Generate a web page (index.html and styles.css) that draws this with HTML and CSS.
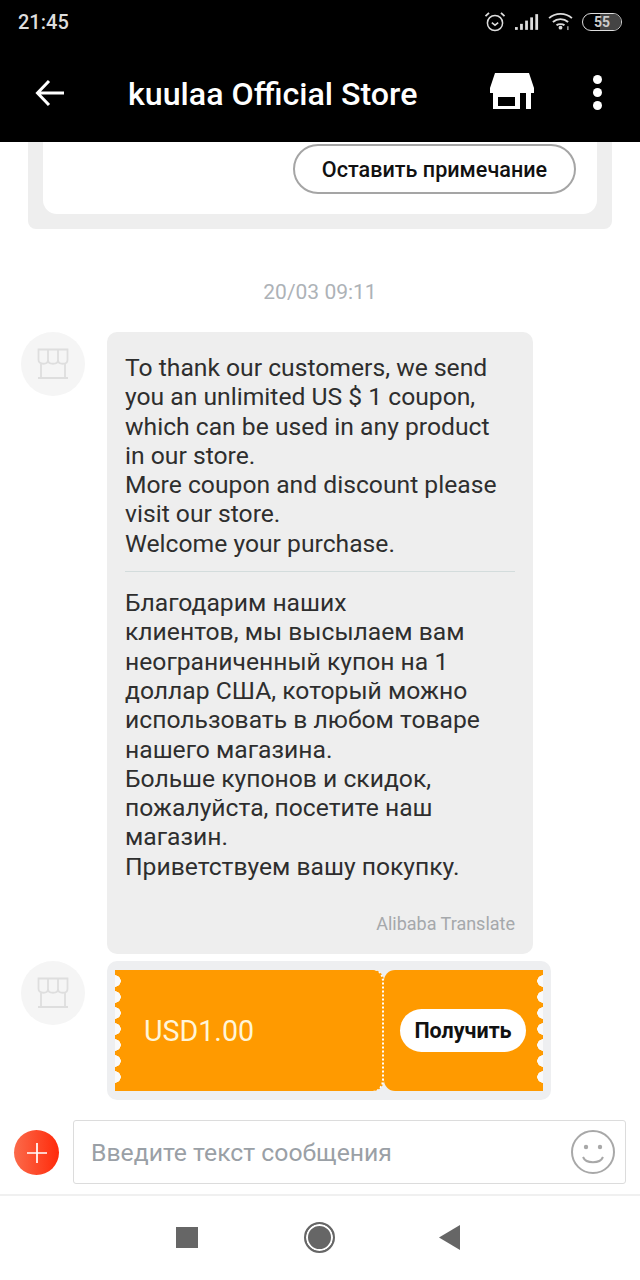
FILE: index.html
```html
<!DOCTYPE html>
<html lang="en">
<head>
    <meta charset="UTF-8">
    <meta name="viewport" content="width=device-width, initial-scale=1.0">
    <title>kuulaa Official Store</title>
    <link rel="stylesheet" href="styles.css">
</head>
<body>
    <div class="page">
        <header class="top">
            <div class="status">
                <span class="clock">21:45</span>
                <div class="status-icons">
                    <svg class="ic-alarm" width="22" height="22" viewBox="0 0 22 22" fill="none" stroke="#ddd" stroke-width="1.5">
                        <circle cx="11" cy="12" r="7.6"/>
                        <path d="M7.8 11.6l3.2 2.6 3.2-2.6"/>
                        <path d="M1.5 5.2L5 1.8M20.5 5.2L17 1.8" stroke-width="1.8"/>
                    </svg>
                    <svg class="ic-signal" width="24" height="18" viewBox="0 0 26 18" fill="#ddd">
                        <rect x="0" y="14.5" width="3" height="3"/>
                        <rect x="5.5" y="11" width="3" height="6.500"/>
                        <rect x="11" y="7.500" width="3" height="10"/>
                        <rect x="16.500" y="4" width="3" height="13.500"/>
                        <rect x="22" y="0.500" width="3" height="17"/>
                    </svg>
                    <svg class="ic-wifi" width="25" height="19" viewBox="0 0 26 20" fill="none" stroke="#ddd" stroke-width="2">
                        <path d="M1 6.500C7.500 0.500 18.500 0.500 25 6.500"/>
                        <path d="M5 10.500C9.500 6.500 16.500 6.500 21 10.500"/>
                        <path d="M8.800 14C11 12.300 15 12.300 17.200 14"/>
                        <circle cx="13" cy="16.500" r="2" fill="#ddd" stroke="none"/>
                        <rect x="20" y="15" width="1.500" height="4" fill="#aaa" stroke="none"/>
                    </svg>
                    <div class="battery"><span class="battery-fill"></span><span class="battery-num">55</span></div>
                </div>
            </div>
            <div class="toolbar">
                <svg class="ic-back" width="30" height="28" viewBox="0 0 30 28" fill="none" stroke="#fff" stroke-width="3">
                    <path d="M29 14H3M14 2L2.500 14 14 26"/>
                </svg>
                <h1 class="title">kuulaa Official Store</h1>
                <svg class="ic-store" width="44" height="36" viewBox="0 0 44 36" fill="#fff">
                    <path d="M5 0H39L44 15V20H0V15Z"/>
                    <path fill-rule="evenodd" d="M3 20H41V36H36V20H30V36H3ZM8 24V33H25V24Z"/>
                </svg>
                <div class="more"><i></i><i></i><i></i></div>
            </div>
        </header>

        <main class="chat">
            <div class="order-card">
                <div class="order-inner">
                    <button class="note-btn">Оставить примечание</button>
                </div>
            </div>

            <div class="time">20/03 09:11</div>

            <div class="msg">
                <div class="avatar">
                    <svg width="32" height="32" viewBox="0 0 32 32" fill="none" stroke="#dedede" stroke-width="1.800">
                        <path d="M1.500 1.500H30.500V12C30.500 17 21 17 21 12C21 17 11 17 11 12C11 17 1.500 17 1.500 12Z"/>
                        <path d="M11 1.500V12M21 1.500V12"/>
                        <path d="M4 16V30H28V16M1 30H31"/>
                    </svg>
                </div>
                <div class="bubble">
                    <p class="bubble-text">To thank our customers, we send<br>you an unlimited US $ 1 coupon,<br>which can be used in any product<br>in our store.<br>More coupon and discount please<br>visit our store.<br>Welcome your purchase.</p>
                    <hr class="bubble-line">
                    <p class="bubble-text">Благодарим наших<br>клиентов, мы высылаем вам<br>неограниченный купон на 1<br>доллар США, который можно<br>использовать в любом товаре<br>нашего магазина.<br>Больше купонов и скидок,<br>пожалуйста, посетите наш<br>магазин.<br>Приветствуем вашу покупку.</p>
                    <div class="translate">Alibaba Translate</div>
                </div>
            </div>

            <div class="msg msg-coupon">
                <div class="avatar">
                    <svg width="32" height="32" viewBox="0 0 32 32" fill="none" stroke="#dedede" stroke-width="1.800">
                        <path d="M1.500 1.500H30.500V12C30.500 17 21 17 21 12C21 17 11 17 11 12C11 17 1.500 17 1.500 12Z"/>
                        <path d="M11 1.500V12M21 1.500V12"/>
                        <path d="M4 16V30H28V16M1 30H31"/>
                    </svg>
                </div>
                <div class="coupon">
                    <div class="coupon-left">USD1.00</div>
                    <div class="coupon-right"><button class="get-btn">Получить</button></div>
                </div>
            </div>
        </main>

        <div class="input-row">
            <div class="plus">
                <svg width="22" height="22" viewBox="0 0 22 22" stroke="#fff" stroke-width="1.700"><path d="M11 1V21M1 11H21"/></svg>
            </div>
            <div class="input-box">
                <span class="placeholder">Введите текст сообщения</span>
                <svg class="ic-smile" width="44" height="44" viewBox="0 0 44 44" fill="none" stroke="#a8a8a8" stroke-width="2">
                    <circle cx="22" cy="22" r="21"/>
                    <circle cx="15" cy="17" r="2.200" fill="#a8a8a8" stroke="none"/>
                    <circle cx="29" cy="17" r="2.200" fill="#a8a8a8" stroke="none"/>
                    <path d="M12 27C15 34 29 34 32 27"/>
                </svg>
            </div>
        </div>

        <nav class="navbar">
            <span class="nav-square"></span>
            <span class="nav-circle"></span>
            <svg class="nav-back" width="21" height="25" viewBox="0 0 21 25" fill="#666"><path d="M21 0V25L0 12.500Z"/></svg>
        </nav>
    </div>
</body>
</html>
```

FILE: styles.css
```css
* {
    box-sizing: border-box;
}
body {
    margin: 0;
    background: #fff;
    font-family: Roboto, "Liberation Sans", sans-serif;
}
.page {
    width: 640px;
    height: 1280px;
    display: flex;
    flex-direction: column;
    overflow: hidden;
}

/* header */
.top {
    height: 142px;
    background: #000;
    color: #fff;
    flex-shrink: 0;
}
.status {
    height: 46px;
    padding: 0 18px 3px 18px;
    display: flex;
    align-items: center;
    justify-content: space-between;
}
.clock {
    font-size: 20px;
    font-weight: 500;
    color: #ddd;
}
.status-icons {
    display: flex;
    align-items: center;
    gap: 9px;
}
.battery {
    position: relative;
    width: 40px;
    height: 18px;
    border: 1.500px solid #ddd;
    border-radius: 9px;
    overflow: hidden;
    display: flex;
    align-items: center;
    justify-content: center;
}
.battery-fill {
    position: absolute;
    left: 45%;
    right: 0;
    top: 0;
    bottom: 0;
    background: #444;
}
.battery-num {
    position: relative;
    font-size: 14px;
    font-weight: 700;
    color: #ccc;
}
.toolbar {
    height: 96px;
    display: flex;
    align-items: center;
    padding: 0 38px 3px 35px;
}
.title {
    margin: 3px 0 0 63px;
    font-size: 32.200px;
    font-weight: 500;
    flex: 1;
    white-space: nowrap;
}
.ic-store {
    margin: 0 59px 3px 0;
}
.more {
    display: flex;
    flex-direction: column;
    gap: 4px;
}
.more i {
    width: 9px;
    height: 9px;
    border-radius: 50%;
    background: #fff;
}

/* chat */
.chat {
    flex: 1;
    min-height: 0;
    overflow: hidden;
}
.order-card {
    margin: 0 28px;
    padding: 0 15px 15px;
    height: 87px;
    background: #eeeeee;
    border-radius: 0 0 8px 8px;
}
.order-inner {
    height: 72px;
    padding: 2px 21px 0 0;
    background: #fff;
    border-radius: 0 0 14px 14px;
    display: flex;
    justify-content: flex-end;
    align-items: flex-start;
}
.note-btn {
    width: 283px;
    height: 50px;
    padding: 0;
    background: #fff;
    border: 2px solid #a5a5a5;
    border-radius: 25px;
    font-family: inherit;
    font-size: 21.600px;
    font-weight: 500;
    color: #111;
}
.time {
    margin-top: 48px;
    text-align: center;
    font-size: 21px;
    line-height: 30px;
    color: #adb2b7;
}
.msg {
    display: flex;
    align-items: flex-start;
    gap: 22px;
    margin: 25px 0 0 21px;
}
.avatar {
    width: 64px;
    height: 64px;
    border-radius: 50%;
    background: #f5f5f5;
    flex-shrink: 0;
    display: flex;
    align-items: center;
    justify-content: center;
}
.bubble {
    width: 426px;
    padding: 21px 18px 18px;
    background: #eeeeee;
    border-radius: 10px;
}
.bubble-text {
    margin: 0;
    font-size: 24.680px;
    line-height: 29.300px;
    color: #2e2e2e;
}
.bubble-line {
    margin: 13px 0 16px;
    border: 0;
    border-top: 1px solid #d3dcdc;
}
.translate {
    margin-top: 31px;
    text-align: right;
    font-size: 18px;
    line-height: 24px;
    color: #a5a8ab;
}
.msg-coupon {
    margin-top: 7px;
}

/* coupon */
.coupon {
    width: 444px;
    height: 139px;
    padding: 9px 8px;
    background: #eeeff1;
    border-radius: 10px;
    display: flex;
}
.coupon-left,
.coupon-right {
    position: relative;
    background-color: #ff9a00;
    display: flex;
    align-items: center;
}
.coupon-left::before,
.coupon-right::after {
    content: "";
    position: absolute;
    top: 3px;
    width: 8px;
    height: 112px;
    background-size: 8px 16px;
    background-repeat: repeat-y;
}
.coupon-left {
    width: 269px;
    padding-left: 29px;
    font-size: 28.600px;
    color: #fff5d8;
    border-radius: 0 11px 11px 0;
    border-right: 2px dotted #fff;
}
.coupon-left::before {
    left: 0;
    background-image: radial-gradient(circle at 0 50%, #fafafa 5.500px, transparent 6px);
}
.coupon-right {
    width: 159px;
    padding-left: 16px;
    border-radius: 11px 0 0 11px;
}
.coupon-right::after {
    right: 0;
    background-image: radial-gradient(circle at 100% 50%, #fafafa 5.500px, transparent 6px);
}
.get-btn {
    width: 126px;
    height: 43px;
    padding: 0;
    background: #fff;
    border: 0;
    border-radius: 22px;
    font-family: inherit;
    font-size: 21.500px;
    font-weight: 700;
    color: #111;
}

/* input */
.input-row {
    height: 96px;
    flex-shrink: 0;
    padding: 20px 14px 11px 14px;
    display: flex;
    align-items: flex-start;
    border-bottom: 2px solid #f0f0f0;
}
.plus {
    width: 45px;
    height: 45px;
    margin-top: 10px;
    border-radius: 50%;
    background: linear-gradient(90deg, #fb6a4a, #ff2a0a);
    flex-shrink: 0;
    display: flex;
    align-items: center;
    justify-content: center;
}
.input-box {
    width: 553px;
    height: 64px;
    margin-left: 14px;
    padding: 0 10px 0 17px;
    border: 1px solid #dcdcdc;
    border-radius: 3px;
    display: flex;
    align-items: center;
    justify-content: space-between;
}
.placeholder {
    font-size: 24.750px;
    color: #9aa0a6;
}

/* android nav */
.navbar {
    height: 84px;
    flex-shrink: 0;
    padding: 0 0 2px 176px;
    display: flex;
    align-items: center;
    gap: 106px;
}
.nav-square {
    width: 22px;
    height: 21px;
    background: #666;
}
.nav-circle {
    width: 31px;
    height: 31px;
    border-radius: 50%;
    background: #666;
    border: 2px solid #666;
    box-shadow: inset 0 0 0 2px #fff;
}
.nav-back {
    margin-left: -2px;
}
```
